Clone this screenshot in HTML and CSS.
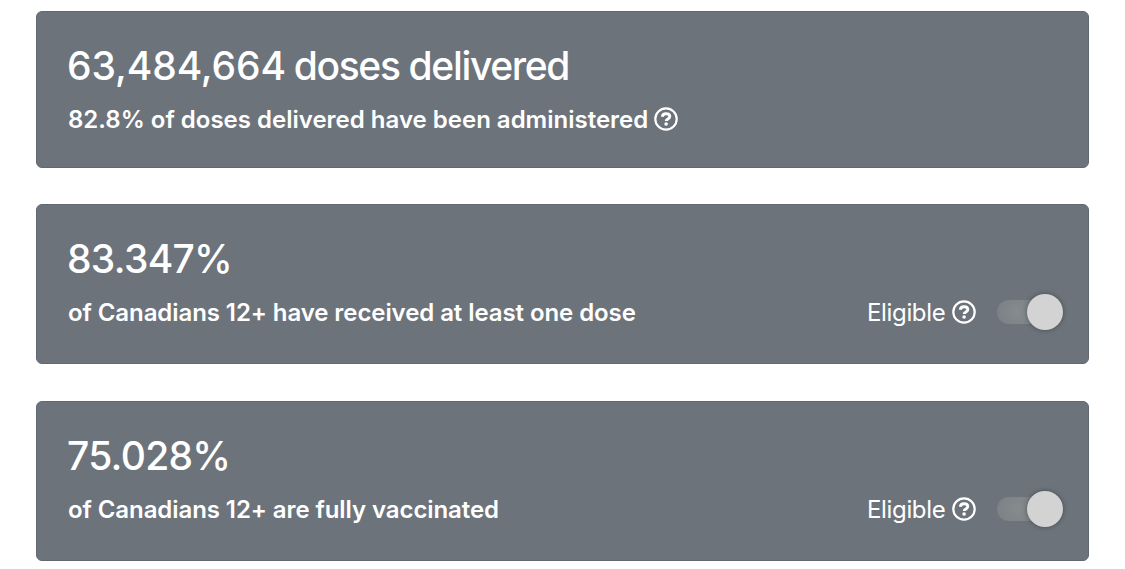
FILE: index.html
```html
<!DOCTYPE html>
<html lang="en">
<head>
    <meta charset="UTF-8">
    <meta name="viewport" content="width=device-width, initial-scale=1.0">
    <title>Vaccination Progress</title>
    <link rel="stylesheet" href="styles.css">
</head>
<body>
    <svg class="sprite" aria-hidden="true">
        <symbol id="help" viewBox="0 0 24 24">
            <circle cx="12" cy="12" r="10.7" fill="none" stroke="currentColor" stroke-width="2.2"/>
            <path d="M8.2 9.8C8.5 7.8 9.9 6.8 12 6.8c2.3 0 3.8 1.1 3.8 2.8 0 2.3-3.6 2.3-3.6 4.4" fill="none" stroke="currentColor" stroke-width="2.9"/>
            <circle cx="12.1" cy="17" r="1.8" fill="currentColor"/>
        </symbol>
    </svg>
    <main class="container">
        <div class="card card-delivered">
            <h2 class="title title-delivered"><span class="count">63,484,664</span> <span class="unit">doses delivered</span></h2>
            <div class="row">
                <p class="text text-delivered">82.8% of doses delivered have been administered</p>
                <svg class="icon"><use href="#help"/></svg>
            </div>
        </div>
        <div class="card">
            <h2 class="title">83.347%</h2>
            <div class="row">
                <p class="text">of Canadians 12+ have received at least one dose</p>
                <div class="eligible">
                    <span class="label">Eligible</span>
                    <svg class="icon"><use href="#help"/></svg>
                    <span class="switch"><span class="thumb"></span></span>
                </div>
            </div>
        </div>
        <div class="card">
            <h2 class="title">75.028%</h2>
            <div class="row">
                <p class="text">of Canadians 12+ are fully vaccinated</p>
                <div class="eligible">
                    <span class="label">Eligible</span>
                    <svg class="icon"><use href="#help"/></svg>
                    <span class="switch"><span class="thumb"></span></span>
                </div>
            </div>
        </div>
    </main>
</body>
</html>
```
FILE: styles.css
```css
body {
    font-family: Inter, sans-serif;
    margin: 0;
    color: #fff;
    background-color: #fff;
    overflow: hidden;
}

.sprite {
    display: none;
}

.container {
    display: flex;
    flex-direction: column;
    gap: 36.5px;
    padding: 10.7px 36px 0;
}

.card {
    box-sizing: border-box;
    height: 160px;
    padding: 30px 24.7px 0 31px;
    border: 1px solid #616871;
    border-radius: 6px;
    background-color: #6c737b;
}

.card-delivered {
    height: 157px;
}

.title {
    margin: 0 0 0 -1px;
    font-size: 39px;
    font-weight: 450;
    letter-spacing: -0.7px;
    line-height: 48px;
    white-space: nowrap;
}

.title-delivered {
    letter-spacing: -0.1px;
}

.unit {
    margin-left: -2.5px;
    letter-spacing: -1.35px;
}

.row {
    display: flex;
    align-items: center;
    height: 36px;
    margin-top: 11px;
}

.text {
    margin: 2px 0 0;
    font-size: 24px;
    font-weight: 600;
    letter-spacing: -0.08px;
    line-height: 36px;
    white-space: nowrap;
}

.text-delivered {
    letter-spacing: 0;
}

.icon {
    flex: none;
    width: 24px;
    height: 24px;
    margin-left: 6px;
}

.eligible {
    display: flex;
    align-items: center;
    margin-left: auto;
}

.label {
    margin-top: 2px;
    font-size: 24px;
    letter-spacing: -0.35px;
    line-height: 36px;
}

.label + .icon {
    margin-left: 7px;
}

.switch {
    display: flex;
    align-items: center;
    justify-content: flex-end;
    width: 66px;
    height: 24px;
    margin-left: 21px;
    border-radius: 12px;
    background: radial-gradient(circle at 20px 12px, #858a8d 2px, #7a8085 22px, #70777e 34px);
}

.thumb {
    width: 36px;
    height: 36px;
    border-radius: 50%;
    background-color: #d3d3d3;
    box-shadow: 0 0 5px rgba(0, 0, 0, 0.35);
}
```
